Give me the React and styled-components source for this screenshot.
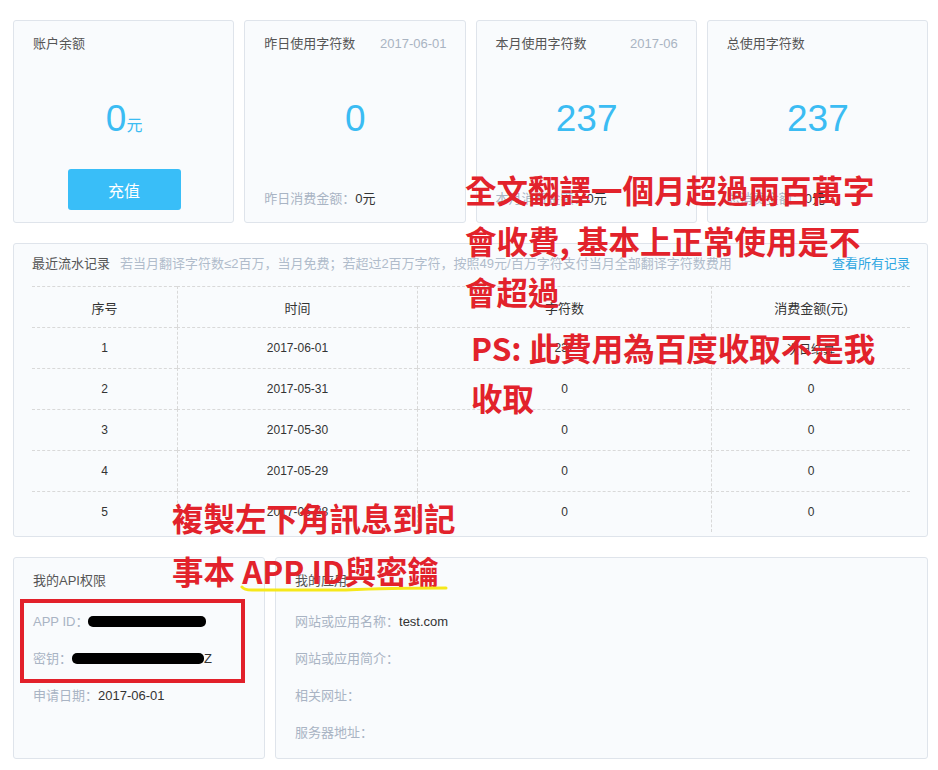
import React from "react";
import styled, { createGlobalStyle } from "styled-components";

const Global = createGlobalStyle`
  html, body { margin: 0; padding: 0; background: #fff; }
  body { font-family: "Liberation Sans", "Noto Sans CJK SC", sans-serif; color: #333; }
  * { box-sizing: border-box; }
`;

const Page = styled.div`
  position: relative;
  width: 938px;
  padding: 20px 10px 12px 13px;
  display: flex;
  flex-direction: column;
  gap: 20px;
`;

const StatRow = styled.div`
  display: grid;
  grid-template-columns: repeat(4, 1fr);
  gap: 10px;
`;

const Card = styled.div`
  background: #f9fbfd;
  border: 1px solid #dfe4eb;
  border-radius: 3px;
`;

const StatCard = styled(Card)`
  height: 203px;
  padding: 14px 18px 12px 19px;
  display: grid;
  grid-template-rows: 32px 1fr 41px;
`;

const TitleRow = styled.div`
  display: flex;
  justify-content: space-between;
  align-items: flex-start;
  font-size: 13px;
  line-height: 18px;
  color: #555;
`;

const DateTag = styled.span`
  color: #a9b4c2;
  font-size: 13px;
`;

const BigNum = styled.div`
  display: flex;
  align-items: center;
  justify-content: center;
  color: #3bbcf3;
  font-size: 37px;
  font-family: "Liberation Sans", Arial, sans-serif;
  span {
    font-size: 16px;
    align-self: baseline;
  }
`;

const NumInner = styled.div`
  line-height: 1;
  display: flex;
  align-items: baseline;
`;

const Unit = styled.span`
  font-size: 16px;
  font-family: "Noto Sans CJK SC", sans-serif;
`;

const Bottom = styled.div`
  display: flex;
  justify-content: ${(p) => (p.$center ? "center" : "flex-start")};
  align-items: flex-end;
`;

const Button = styled.button`
  width: 113px;
  height: 41px;
  border: none;
  border-radius: 3px;
  background: #39bef8;
  color: #fff;
  font-size: 16px;
  font-family: "Noto Sans CJK SC", sans-serif;
`;

const FooterText = styled.div`
  font-size: 13px;
  line-height: 18px;
  margin-bottom: 2px;
  color: #a9b4c4;
  b { font-weight: normal; color: #333; }
`;

const Panel = styled(Card)`
  height: 294px;
  padding: 11px 17px 0 18px;
`;

const PanelHead = styled.div`
  display: flex;
  align-items: center;
  font-size: 13px;
  line-height: 18px;
  height: 31px;
  align-items: flex-start;
`;

const PanelTitle = styled.span`
  color: #555;
  margin-right: 10px;
`;

const Hint = styled.span`
  color: #b0bccb;
  flex: 1;
`;

const Link = styled.a`
  color: #2ea6e1;
  text-decoration: none;
`;

const Table = styled.div`
  display: grid;
  grid-template-columns: 145px 240px 294px 1fr;
`;

const Cell = styled.div`
  height: 41px;
  display: flex;
  align-items: center;
  justify-content: center;
  border-top: ${(p) => (p.$noTop ? "none" : "1px dashed #d9d9d9")};
  border-left: ${(p) => (p.$first ? "none" : "1px dashed #d9d9d9")};
  font-size: ${(p) => (p.$head ? "13px" : "12px")};
  color: #333;
`;

const BottomRow = styled.div`
  display: grid;
  grid-template-columns: 252px 1fr;
  gap: 10px;
`;

const InfoCard = styled(Card)`
  height: 202px;
  padding: 14px 19px;
`;

const InfoTitle = styled.div`
  font-size: 13px;
  line-height: 18px;
  color: #555;
  margin-bottom: 13px;
`;

const InfoLine = styled.div`
  font-size: 13px;
  height: 37px;
  line-height: 37px;
  color: #a9b4c4;
  display: flex;
  align-items: center;
  b { font-weight: normal; color: #333; }
`;

const Redact = styled.span`
  display: inline-block;
  width: ${(p) => p.$w}px;
  height: 11px;
  background: #000;
  border-radius: 5px;
`;

const Overlay = styled.div`
  position: absolute;
  left: ${(p) => p.$x}px;
  top: ${(p) => p.$y}px;
  font-family: "Noto Sans CJK TC", sans-serif;
  font-weight: 700;
  font-size: 31.5px;
  line-height: ${(p) => p.$lh}px;
  color: #e2222b;
  white-space: nowrap;
  pointer-events: none;
`;

const RedBox = styled.div`
  position: absolute;
  left: 20px;
  top: 599px;
  width: 225px;
  height: 84px;
  border: 4px solid #e2202a;
`;

const Underline = styled.svg`
  position: absolute;
  left: 238px;
  top: 582px;
`;

export default function App() {
  const stats = [
    { title: "账户余额", num: "0", unit: "元", button: true },
    { title: "昨日使用字符数", date: "2017-06-01", num: "0", foot: "昨日消费金额：" },
    { title: "本月使用字符数", date: "2017-06", num: "237", foot: "本月消费金额：" },
    { title: "总使用字符数", num: "237", foot: "总消费金额：" },
  ];
  const rows = [
    ["1", "2017-06-01", "237", "次日结算"],
    ["2", "2017-05-31", "0", "0"],
    ["3", "2017-05-30", "0", "0"],
    ["4", "2017-05-29", "0", "0"],
    ["5", "2017-05-28", "0", "0"],
  ];
  const head = ["序号", "时间", "字符数", "消费金额(元)"];
  return (
    <Page>
      <Global />
      <StatRow>
        {stats.map((s) => (
          <StatCard key={s.title}>
            <TitleRow>
              <span>{s.title}</span>
              {s.date && <DateTag>{s.date}</DateTag>}
            </TitleRow>
            <BigNum>
              <NumInner>
                {s.num}
                {s.unit && <Unit>{s.unit}</Unit>}
              </NumInner>
            </BigNum>
            <Bottom $center={s.button}>
              {s.button ? (
                <Button>充值</Button>
              ) : (
                <FooterText>
                  {s.foot}
                  <b>0元</b>
                </FooterText>
              )}
            </Bottom>
          </StatCard>
        ))}
      </StatRow>

      <Panel>
        <PanelHead>
          <PanelTitle>最近流水记录</PanelTitle>
          <Hint>若当月翻译字符数≤2百万，当月免费；若超过2百万字符，按照49元/百万字符支付当月全部翻译字符数费用</Hint>
          <Link href="#">查看所有记录</Link>
        </PanelHead>
        <Table>
          {head.map((h, i) => (
            <Cell key={h} $head $first={i === 0}>{h}</Cell>
          ))}
          {rows.map((r) =>
            r.map((c, i) => (
              <Cell key={r[0] + "-" + i} $first={i === 0}>{c}</Cell>
            ))
          )}
        </Table>
      </Panel>

      <BottomRow>
        <InfoCard>
          <InfoTitle>我的API权限</InfoTitle>
          <InfoLine>APP ID：<Redact $w={118} /></InfoLine>
          <InfoLine>密钥：<Redact $w={132} /><b>Z</b></InfoLine>
          <InfoLine>申请日期：<b>2017-06-01</b></InfoLine>
        </InfoCard>
        <InfoCard>
          <InfoTitle>我的应用</InfoTitle>
          <InfoLine>网站或应用名称：<b>test.com</b></InfoLine>
          <InfoLine>网站或应用简介：</InfoLine>
          <InfoLine>相关网址：</InfoLine>
          <InfoLine>服务器地址：</InfoLine>
        </InfoCard>
      </BottomRow>

      <RedBox />
      <Overlay $x={465} $y={164} $lh={51}>
        全文翻譯一個月超過兩百萬字
        <br />
        會收費, 基本上正常使用是不
        <br />
        會超過
      </Overlay>
      <Overlay $x={471} $y={322} $lh={50}>
        PS: 此費用為百度收取不是我
        <br />
        收取
      </Overlay>
      <Overlay $x={172} $y={491} $lh={53}>
        複製左下角訊息到記
        <br />
        事本 APP ID與密鑰
      </Overlay>
      <Underline width="214" height="12" viewBox="0 0 214 12">
        <path d="M4 5 Q6 8 14 8 L108 8 Q150 6 208 6" stroke="#f6e81a" strokeWidth="3" fill="none" strokeLinecap="round" />
      </Underline>
    </Page>
  );
}
